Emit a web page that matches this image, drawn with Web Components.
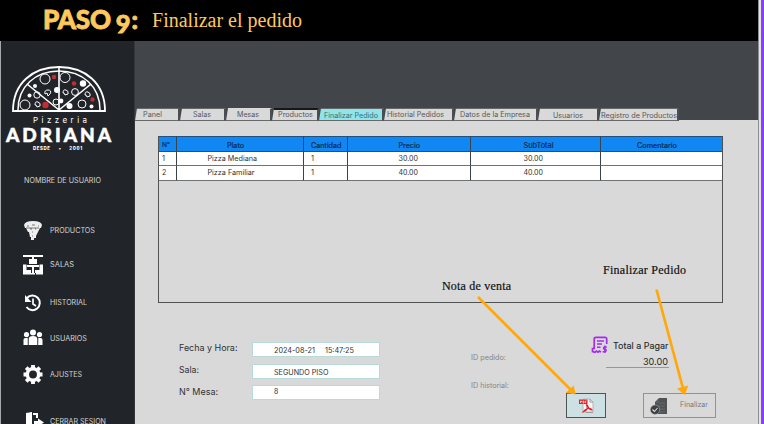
<!DOCTYPE html>
<html lang="es">
<head>
<meta charset="utf-8">
<title>Finalizar el pedido</title>
<style>
html,body{margin:0;width:764px;height:424px;overflow:hidden;background:#d9d9d9}
body{font-family:Inter,"Liberation Sans",sans-serif}
</style>
</head>
<body>
<guide-page></guide-page>
<script>
function define(name, html, extra){
  customElements.define(name, class extends HTMLElement{
    constructor(){
      super();
      this.attachShadow({mode:'open'}).innerHTML = typeof html==='function' ? html(this) : html;
    }
    connectedCallback(){ if(extra) extra(this); }
  });
}

define('step-header', `<style>
:host{display:flex;height:41px;box-sizing:border-box;padding-left:42px;background:#000;color:#ffc95c;overflow:hidden}
.s{font:900 26px/38px Lato,sans-serif;width:109px;white-space:nowrap;display:flex;-webkit-text-stroke:.8px #ffc95c}
.n{margin:4px 0 0 5px}.c{margin-left:1px}.t{font:20px/40px "Liberation Serif",serif}
</style><div class="s"><fit-text w="68" size="26">PASO</fit-text><fit-text class="n" size="25.500">9</fit-text><fit-text class="c" size="25">:</fit-text></div>
<fit-text class="t" w="150" size="20">Finalizar el pedido</fit-text>`);

define('pizza-logo', `<style>
:host{display:flex;flex-direction:column;align-items:flex-start;height:125px;color:#fff}
svg{display:block;margin:24px 0 0 10px}
.p{margin:2px 0 0 32px;line-height:11px}.a{font-family:Lato,sans-serif;font-weight:900;line-height:20px;margin:-1px 0 0 5px;-webkit-text-stroke:.5px #fff}
.d{display:flex;margin:-1px 0 0 32px;line-height:9px;font-weight:800;width:50px;justify-content:space-between}
</style>
<svg width="96" height="48" viewBox="0 0 96 48" fill="none" stroke="#fff">
<path d="M2 46C2 18 22 2 48 2S94 18 94 46Z" stroke-width="1.8"/>
<path d="M7 45C7 21 25 6 48 6S89 21 89 45" stroke-width="1.5"/>
<path d="M48 2V45M48 45L16 19M48 45L80 19" stroke-width="1.6"/>
<g stroke-width="1"><circle cx="34" cy="14" r="5"/><circle cx="54" cy="12.500" r="5"/><circle cx="14" cy="40" r="5"/><circle cx="26" cy="30" r="3.200"/><circle cx="64" cy="27" r="3.400"/><circle cx="71" cy="39" r="4"/><circle cx="45" cy="37" r="3"/>
<path d="M34 29q-1-4 3-4t2 4l-2 2-1-3zM52 28q0-4 3-3t2 4l-3 1-1-2zM24 40q0-4 3-3t2 4l-3 1-1-2zM74 30q0-4 3-3t2 4l-3 1-1-2z"/></g>
<g fill="#fff" stroke="none"><circle cx="46" cy="25" r="3"/><circle cx="72" cy="18.500" r="3.200"/><circle cx="24" cy="21" r="2"/><circle cx="18.500" cy="30.500" r="2"/><circle cx="58.500" cy="41" r="3"/><circle cx="50" cy="36" r="2.400"/><circle cx="80.500" cy="41.500" r="2"/></g>
<g fill="#c32d32" stroke="none"><circle cx="43" cy="12" r="2.200"/><circle cx="63" cy="18.500" r="2.200"/><circle cx="34.500" cy="40" r="3.200"/><circle cx="81.500" cy="34.500" r="2.200"/></g>
</svg>
<fit-text class="p" w="54" size="8">Pizzeria</fit-text>
<fit-text class="a" w="105" size="19">ADRIANA</fit-text>
<div class="d"><fit-text w="17" size="4.4">DESDE</fit-text><fit-text size="5" w="2">•</fit-text><fit-text w="13" size="4.4">2001</fit-text></div>`);

const icons={
 pizza:`<path d="M2 5Q3 1 11 1t9 4l-1 3H3zM4 8h14l-2 4H6zM7 12h9l-2 4v2h-2v2h-3v-3H8z" fill="#eee"/><path d="M5 6h2m3-1h3m3 1h1M8 9h2m3 0h1m-4 3h1m-1 4h1M4 8h13" stroke="#77797b" stroke-width="1.100"/>`,
 room:`<path d="M1 1h20v2H1zM10 2h2v3h-2zM7 5h8v5H7zM5 11h12v2H5zM10 13h2v6h2v1.500H8V19h2zM1 10.500h3.500V16H9v4.500H1zM21 10.500h-3.500V16H13v4.500h8z" fill="#fff"/>`,
 history:`<path d="M5 6A7.300 7.300 0 1 1 4.500 15" stroke="#fff" stroke-width="2" fill="none"/><path d="M3 3v7h6.500z" fill="#fff"/><path d="M11 6.500V12l3 2" fill="none" stroke="#fff" stroke-width="1.700"/>`,
 users:`<g fill="#fff"><circle cx="11" cy="4.500" r="3"/><circle cx="4.500" cy="6.500" r="2.600"/><circle cx="17.500" cy="6.500" r="2.600"/><path d="M6.700 17V11q0-3 4.300-3t4.300 3v6zM1.500 17v-5q0-2.500 4.200-2.300L5.800 17zM20.500 17v-5q0-2.500-4.200-2.300l-.1 7.300z"/></g>`,
 gear:`<circle cx="11" cy="10.500" r="5.700" fill="none" stroke="#fff" stroke-width="3.500"/><path d="M11 1v3M11 17v3M1.500 10.500h3M17.500 10.500h3M4.200 3.700l2 2M15.800 15.300l2 2M4.200 17.300l2-2M15.800 5.700l2-2" stroke="#fff" stroke-width="3.800"/>`,
 exit:`<path d="M4 2l6-1v20l-6-2zM11 2h5v5h-2V4h-3z" fill="#fff"/><path d="M12 10h4V7.500l6 4-6 4V13h-4z" fill="#fff"/><path d="M12 14h2v5h-2z" fill="#fff"/>`
};
define('nav-item', el=>`<style>
:host{display:flex;align-items:center;color:#d2d3d4;line-height:12px}svg{margin:0 6px 0 21px;flex:none}
</style><svg width="22" height="22" viewBox="0 0 22 22">${icons[el.getAttribute('icon')]}</svg><fit-text w="${el.getAttribute('w')}"><slot></slot></fit-text>`);

define('side-bar', `<style>
:host{display:block;height:383px;background:#212529;overflow:hidden;border-right:1px solid #34383c;box-sizing:border-box;width:134px}
.u{color:#d2d3d4;height:48px;padding:9px 0 0 23px;box-sizing:border-box;line-height:12px}
nav{display:grid;grid-template-rows:34px 34px 41px 31px 41px 54px}
</style><pizza-logo></pizza-logo><div class="u"><fit-text w="77">NOMBRE DE USUARIO</fit-text></div>
<nav><nav-item icon="pizza" w="45">PRODUCTOS</nav-item><nav-item icon="room" w="24">SALAS</nav-item><nav-item icon="history" w="37">HISTORIAL</nav-item><nav-item icon="users" w="37">USUARIOS</nav-item><nav-item icon="gear" w="32">AJUSTES</nav-item><nav-item icon="exit" w="56">CERRAR SESION</nav-item></nav>`);

define('tab-item', el=>`<style>
:host{display:block;height:13px;box-sizing:border-box;background:#d9d9d9;border:1px solid #66686a;border-left:0;border-right:2px solid #4b4d50;color:#55585b;clip-path:polygon(2px 0,100% 0,100% 100%,0 100%)}
:host([active]){background:#8ee6ec;color:#3f6c70}
:host([soft]){border-top-color:#d9d9d9}
:host([dark]){border-top:2px solid #151719}
div{padding-left:${el.getAttribute('pad')}px;margin-top:${el.getAttribute('dy')||-1.5}px;line-height:13px}
</style><div><fit-text w="${el.getAttribute('w')}"><slot></slot></fit-text></div>`);

define('tab-bar', `<style>
:host{display:grid;grid-template-columns:45px 46px 46px 47px 65px 70px 84px 61px 80px;padding-top:67px;background:linear-gradient(#424549 79px,#d9d9d9 79px)}
</style><tab-item pad="8" w="19">Panel</tab-item><tab-item pad="13" w="18">Salas</tab-item><tab-item soft pad="11" w="22">Mesas</tab-item><tab-item dark pad="6" w="35" dy="-2">Productos</tab-item><tab-item active pad="5" w="54" dy="-.5">Finalizar Pedido</tab-item><tab-item pad="3" w="57" dy="-1">Historial Pedidos</tab-item><tab-item pad="6" w="70">Datos de la Empresa</tab-item><tab-item pad="15" w="30" dy="-.5">Usuarios</tab-item><tab-item pad="2" w="76" dy="-.5">Registro de Productos</tab-item>`);

const cell=(pad,w,t)=>`<div style="padding-left:${pad}px">${t?`<fit-text w="${w}">${t}</fit-text>`:''}</div>`;
define('order-table', `<style>
:host{display:block;width:565px;height:167px;box-sizing:border-box;margin:15px 0 0 23px;border:1px solid #505254;border-top:0}
.r{display:grid;grid-template-columns:18px 127px 44px 123px 130px 121px;grid-template-rows:100%;height:14px;background:#fff;color:#303234;line-height:13px}
.r div{border-right:1px solid #3a424a;border-bottom:1px solid #707274;box-sizing:border-box;white-space:nowrap}
.r div:last-child{border-right:0}
.r.h{background:#1187f3;height:16px;color:#0a2c50;line-height:17px;-webkit-text-stroke:.2px #0a2c50}
.r.h div{border-bottom-color:#23507d;border-top:1px solid #23507d}
.r:last-child{height:15px}
</style>
<div class="r h">${cell(3,8,'N°')+cell(50,17,'Plato')+cell(7,30.5,'Cantidad')+cell(50.5,21.5,'Precio')+cell(52.5,30,'SubTotal')+cell(36,40,'Comentario')}</div>
<div class="r">${cell(3,3,'1')+cell(30.5,49.5,'Pizza Mediana')+cell(7,3,'1')+cell(50.5,19.5,'30.00')+cell(52.5,19.5,'30.00')+cell(0,0,'')}</div>
<div class="r">${cell(3,4.4,'2')+cell(30.5,47,'Pizza Familiar')+cell(7,3,'1')+cell(50.5,19.5,'40.00')+cell(52.5,19.5,'40.00')+cell(0,0,'')}</div>`);

define('form-field', `<style>
:host{display:grid;grid-template-columns:73px 128px;height:15px;color:#303234;line-height:13px}
.v{box-sizing:border-box;height:15px;background:#fff;border:1px solid #b8dada;padding-left:21px;display:flex;gap:10px}
</style><div><slot name="label"></slot></div><div class="v"><slot></slot></div>`);

define('order-form', `<style>
:host{display:flex;flex-direction:column;gap:6px;width:201px;padding:39px 0 0 44px}
form-field:first-of-type{margin-bottom:1px}.up{margin-top:-1px}
.lo{margin-top:1px}
</style>
<form-field><fit-text slot="label" w="58.500" class="up">Fecha y Hora:</fit-text><fit-text w="41" class="lo">2024-08-21</fit-text><fit-text class="lo" w="29">15:47:25</fit-text></form-field>
<form-field><fit-text slot="label" w="20">Sala:</fit-text><fit-text w="54.500" class="lo">SEGUNDO PISO</fit-text></form-field>
<form-field><fit-text slot="label" w="39">N° Mesa:</fit-text><fit-text class="up" w="4.500" size="7">8</fit-text></form-field>`);

define('order-ids', `<style>
:host{display:flex;flex-direction:column;gap:16px;padding:49px 0 0 91px;box-sizing:border-box;color:#858688;line-height:12px;width:186px}
</style><fit-text w="35">ID pedido:</fit-text><fit-text w="38">ID historial:</fit-text>`);

define('order-actions', `<style>
:host{display:block;width:151px;padding-top:33px}
.t{display:flex;align-items:center;padding-left:25px;height:18px;color:#25272a}
.t fit-text{margin-left:5px;-webkit-text-stroke:.1px #25272a}
.n{width:63px;height:13px;margin-left:40px;border-bottom:1px solid #79a2aa;display:flex;justify-content:flex-end;line-height:15px;color:#25272a}
.n fit-text{margin-right:1px}
.b{display:flex;gap:37px;margin-top:25px}
button{all:unset;box-sizing:border-box;height:25px;display:flex;align-items:center}
.pdf{width:40px;background:#cde1e4;border:1px solid #4e5355;justify-content:center}
.ok{width:73px;border:1px solid #929292;color:#77797b;padding-left:6px;line-height:12px}
.ok fit-text{margin:-2px 0 0 12px}
svg{display:block;flex:none}
</style>
<div class="t"><svg width="17" height="18" viewBox="0 0 17 18" fill="none" stroke="#a62bf2" stroke-width="1.700"><path d="M10 16.200L8.500 15 7 16.200 5.500 15 4 16.200 1.500 15.500V12.500H3.200V3Q3.200 1.300 5 1.300H14Q15.700 1.300 15.700 3V8M3.200 12.500V3"/><path d="M6 5h7M6 8h5M6 11.300h3.500" stroke-width="1.400"/><path d="M15.800 11h-2.600q-1.300 1.200 0 2.200h1.200q1.500 1 0 2.500h-2.700M13.900 9.500v7.500" stroke-width="1.400"/></svg><fit-text w="55.500">Total a Pagar</fit-text></div>
<div class="n"><fit-text w="25">30.00</fit-text></div>
<div class="b"><button class="pdf" aria-label="PDF"><svg width="17" height="16" viewBox="0 0 17 16"><path d="M5 1h7l3 3v10H5z" fill="#f5f5f5" stroke="#aaa" stroke-width=".8"/><path d="M12 1v3h3M8 14.500h7" fill="none" stroke="#999"/><path d="M1 1.500h8.500v4.500H1z" fill="#df2429"/><path d="M2.500 5V3h1v1h-1M5 5V3h1v2zM7.500 5V3h1" fill="none" stroke="#fff" stroke-width=".6"/><path d="M8 6.500q2 2 1 4.500t-4 3q2-3 5-3.500t4 1.500q-3 0-5-5.500" fill="none" stroke="#df2429" stroke-width="1.200"/></svg></button>
<button class="ok"><svg width="18" height="18" viewBox="0 0 18 18"><path d="M9 1h8v16H5V5z" fill="#505356"/><path d="M8 6h7M8 9h7M10 12h5M10 15h5M8 2v3H6" stroke="#6e7173" stroke-width=".7" fill="none"/><circle cx="5" cy="12.700" r="4.700" fill="#3e4144" stroke="#bbb" stroke-width=".5"/><path d="M2.500 12.500l2 2 3-3.500" fill="none" stroke="#d9d9d9" stroke-width="1.100"/></svg><fit-text w="28">Finalizar</fit-text></button></div>`);

define('order-panel', `<style>
:host{display:block;width:623px;height:383px;overflow:hidden;background:#d9d9d9}
.f{display:flex}
</style><tab-bar></tab-bar><order-table></order-table><div class="f"><order-form></order-form><order-ids></order-ids><order-actions></order-actions></div>`);

define('callout-layer', `<style>
:host{position:absolute;inset:0;pointer-events:none;color:#111;font-family:"Liberation Serif",serif;line-height:14px;-webkit-text-stroke:.2px #111}
svg{position:absolute;inset:0}.a{position:absolute;left:442px;top:279px}.b{position:absolute;left:603px;top:263px}
</style><svg width="764" height="424"><g stroke="#ffa80b" stroke-width="2.700"><path d="M478 297L571 390M656.500 289.500L683.200 389"/></g><path d="M565.700 393L575.800 394.500 573.600 385.500zM677 388.500L688.300 385.500 684.700 395z" fill="#ffa80b"/></svg>
<fit-text class="a" w="69" size="12">Nota de venta</fit-text><fit-text class="b" w="83" size="12">Finalizar Pedido</fit-text>`);

define('guide-page', `<style>
:host{display:block;position:relative;width:764px;height:424px;overflow:hidden;box-sizing:border-box}
.page{display:grid;grid-template-columns:1px 757px 1px 2px 3px;height:424px}
.l{background:linear-gradient(#000 41px,#a6a9ab 41px)}.e{background:#8d8f91}.w{background:#e4e2e8}.v{background:#8b3dff}
.m{display:flex}
</style><div class="page"><div class="l"></div><div><step-header></step-header><div class="m"><side-bar></side-bar><order-panel></order-panel></div></div><div class="e"></div><div class="w"></div><div class="v"></div></div><callout-layer></callout-layer>`);

/* Text run fitted to a width: by font size, or by tracking when a size is given. */
define('fit-text', `<style>:host{display:inline-flex;font-size:0;white-space:nowrap;vertical-align:top}span{display:block;flex:none}</style><span><slot></slot></span>`, el=>{
  const s=el.shadowRoot.querySelector('span'), w=+el.getAttribute('w'), size=+el.getAttribute('size');
  const n=(el.querySelector('slot')?el.querySelector('slot').assignedNodes().map(x=>x.textContent).join(''):el.textContent).trim().length;
  s.style.fontSize=(size||100)+'px';
  if(!w) return;
  if(!size) s.style.fontSize=(100*w/s.getBoundingClientRect().width).toFixed(2)+'px';
  else if(n>1) s.style.letterSpacing=((w-s.getBoundingClientRect().width)/(n-1)).toFixed(3)+'px';
});
</script>
</body>
</html>
